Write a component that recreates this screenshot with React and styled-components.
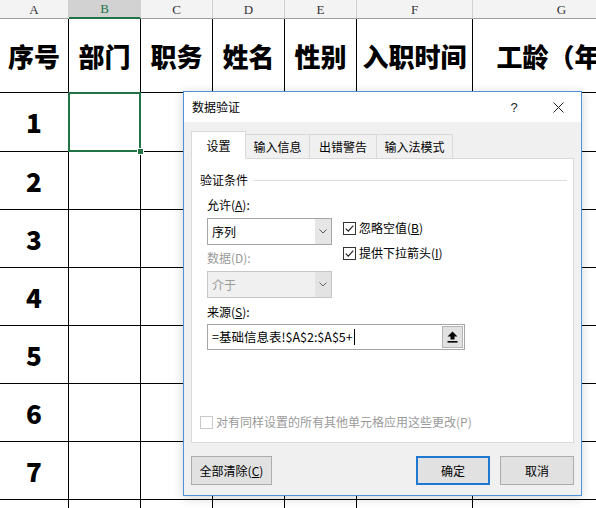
import React from 'react';
import styled, { createGlobalStyle } from 'styled-components';

const GlobalStyle = createGlobalStyle`
  html, body { margin: 0; padding: 0; background: #fff; overflow: hidden; }
  body { font-family: "Noto Sans CJK SC", "Noto Sans", sans-serif; }
  #root { width: 596px; height: 508px; position: relative; overflow: hidden; }
`;

const CJK = `"Noto Sans CJK SC", "Noto Sans", sans-serif`;

/* ---------- Spreadsheet ---------- */
const Sheet = styled.div`
  display: grid;
  grid-template-columns: 69px 72px 72px 72px 72px 116px 178px;
  grid-template-rows: 19px 74px 59px repeat(7, 58px);
  width: 651px;
`;

const ColHead = styled.div`
  box-sizing: border-box;
  display: flex;
  align-items: center;
  justify-content: center;
  background: ${p => (p.$active ? '#d2d2d2' : '#f3f3f3')};
  border-right: 1px solid #cfcfcf;
  border-bottom: ${p => (p.$active ? '2px solid #217346' : '1px solid #9e9e9e')};
  color: ${p => (p.$active ? '#217346' : '#333')};
  font-family: "Liberation Serif", "DejaVu Serif", serif;
  font-size: 13px;
  line-height: 1;
`;

const Cell = styled.div`
  position: relative;
  box-sizing: border-box;
  border-right: 1px solid #000;
  border-bottom: 1px solid #000;
  display: flex;
  align-items: center;
  justify-content: center;
  font-family: ${CJK};
  font-weight: 900;
  font-size: 26px;
  line-height: 1;
  color: #000;
  white-space: nowrap;
  ${p =>
    p.$selected &&
    `
    &::after {
      content: '';
      position: absolute;
      left: -1px; top: -1px; right: -1px; bottom: -1px;
      border: 2px solid #217346;
      z-index: 1;
    }
    &::before {
      content: '';
      position: absolute;
      right: -4px; bottom: -4px;
      width: 5px; height: 5px;
      background: #217346;
      border: 1px solid #fff;
      z-index: 2;
    }
  `}
`;

/* ---------- Dialog ---------- */
const Dialog = styled.div`
  position: absolute;
  left: 183px;
  top: 91px;
  width: 399px;
  box-sizing: border-box;
  border: 1px solid #4d93d9;
  background: #f0f0f0;
  display: flex;
  flex-direction: column;
  font-family: ${CJK};
  font-size: 12px;
  color: #000;
  box-shadow: 0 2px 10px rgba(0, 0, 0, 0.18);
  z-index: 5;
`;

const TitleBar = styled.div`
  height: 30px;
  background: #fff;
  display: flex;
  align-items: center;
  padding-left: 8px;
`;

const Title = styled.span`
  flex: 1;
  line-height: 16px;
`;

const TitleButton = styled.div`
  width: ${p => p.$w}px;
  height: 30px;
  margin-left: ${p => p.$ml || 0}px;
  display: flex;
  align-items: center;
  justify-content: center;
  font-family: "Liberation Sans", sans-serif;
  font-size: 13px;
  color: #222;
`;

const Body = styled.div`
  display: flex;
  flex-direction: column;
  padding: 9px 7px 10px 7px;
`;

const TabList = styled.div`
  display: flex;
  align-items: flex-end;
  height: 27px;
  position: relative;
  z-index: 2;
`;

const Tab = styled.div`
  box-sizing: border-box;
  width: ${p => p.$w}px;
  height: ${p => (p.$active ? 28 : 24)}px;
  margin-bottom: ${p => (p.$active ? -1 : 0)}px;
  margin-left: ${p => (p.$first ? 0 : -1)}px;
  display: flex;
  align-items: flex-end;
  justify-content: center;
  padding-bottom: ${p => (p.$active ? 4 : 3)}px;
  line-height: 16px;
  background: ${p => (p.$active ? '#fff' : '#f0f0f0')};
  border: 1px solid #d9d9d9;
  border-bottom: ${p => (p.$active ? '1px solid #fff' : 'none')};
  position: relative;
  z-index: ${p => (p.$active ? 2 : 1)};
`;

const Panel = styled.div`
  box-sizing: border-box;
  height: 285px;
  background: #fff;
  border: 1px solid #d9d9d9;
  padding: 13px 6px 12px 8px;
  display: flex;
  flex-direction: column;
  position: relative;
  z-index: 1;
`;

const Group = styled.div`
  display: flex;
  align-items: center;
  line-height: 16px;
`;

const GroupLine = styled.div`
  flex: 1;
  height: 1px;
  background: #dcdcdc;
  margin-left: 5px;
`;

const Form = styled.div`
  margin-left: 7px;
  margin-top: 9px;
  display: flex;
  flex-direction: column;
`;

const FieldRow = styled.div`
  display: flex;
`;

const LeftCol = styled.div`
  width: 125px;
  display: flex;
  flex-direction: column;
`;

const RightCol = styled.div`
  margin-left: 11px;
  padding-top: 23px;
  display: flex;
  flex-direction: column;
  gap: 9px;
`;

const Label = styled.div`
  line-height: 16px;
  margin-top: ${p => p.$mt || 0}px;
  color: ${p => (p.$disabled ? '#9a9a9a' : '#000')};
  u { text-underline-offset: 1px; }
`;

const Select = styled.div`
  box-sizing: border-box;
  margin-top: 5px;
  height: 27px;
  width: 125px;
  display: flex;
  border: 1px solid ${p => (p.$disabled ? '#c6c6c6' : '#a6a6a6')};
  background: ${p => (p.$disabled ? '#f0f0f0' : '#fff')};
  color: ${p => (p.$disabled ? '#9a9a9a' : '#000')};
`;

const SelectValue = styled.div`
  flex: 1;
  padding-left: 4px;
  display: flex;
  align-items: center;
`;

const SelectArrow = styled.div`
  width: 16px;
  background: ${p => (p.$disabled ? '#e3e3e3' : '#e6e6e6')};
  display: flex;
  align-items: center;
  justify-content: center;
`;

const CheckRow = styled.div`
  display: flex;
  align-items: center;
  gap: 3px;
  line-height: 16px;
  color: ${p => (p.$disabled ? '#9a9a9a' : '#000')};
`;

const Box = styled.div`
  box-sizing: border-box;
  width: 13px;
  height: 13px;
  border: 1px solid ${p => (p.$disabled ? '#c8c8c8' : '#333')};
  background: #fff;
  display: flex;
  align-items: center;
  justify-content: center;
`;

const SourceInput = styled.div`
  box-sizing: border-box;
  margin-top: 4px;
  width: 258px;
  height: 26px;
  border: 1px solid #a6a6a6;
  background: #fff;
  display: flex;
  align-items: center;
`;

const InputText = styled.div`
  flex: 1;
  padding-left: 4px;
  font-size: 12.5px;
  display: flex;
  align-items: center;
  line-height: 16px;
`;

const Caret = styled.span`
  display: inline-block;
  width: 1px;
  height: 16px;
  background: #000;
  margin-left: 1px;
`;

const UpButton = styled.div`
  box-sizing: border-box;
  width: 21px;
  height: 22px;
  margin-right: 1px;
  background: #e1e1e1;
  border: 1px solid #b4b4b4;
  display: flex;
  align-items: center;
  justify-content: center;
`;

const ApplyAll = styled(CheckRow)`
  margin-top: auto;
`;

const Footer = styled.div`
  margin-top: 13px;
  display: flex;
  align-items: center;
`;

const Button = styled.div`
  box-sizing: border-box;
  width: ${p => p.$w}px;
  height: 29px;
  margin-left: ${p => p.$ml || 0}px;
  background: #e1e1e1;
  border: ${p => (p.$primary ? '2px solid #1f79d3' : '1px solid #adadad')};
  display: flex;
  align-items: center;
  justify-content: center;
  line-height: 16px;
`;

const Spacer = styled.div`
  flex: 1;
`;

/* ---------- Icons ---------- */
const CloseIcon = () => (
  <svg width="11" height="11" viewBox="0 0 11 11">
    <path d="M0.5 0.5 L10.5 10.5 M10.5 0.5 L0.5 10.5" stroke="#222" strokeWidth="1" fill="none" />
  </svg>
);

const Chevron = ({ color = '#555' }) => (
  <svg width="8" height="5" viewBox="0 0 8 5">
    <path d="M0.5 0.5 L4 4 L7.5 0.5" stroke={color} strokeWidth="1" fill="none" />
  </svg>
);

const Check = () => (
  <svg width="11" height="11" viewBox="0 0 11 11">
    <path d="M1.8 5.6 L4.3 8.1 L9.3 2.6" stroke="#222" strokeWidth="1.2" fill="none" />
  </svg>
);

const UpArrowIcon = () => (
  <svg width="11" height="12" viewBox="0 0 11 12">
    <polygon points="5.5,0.5 0.5,5.5 3.5,5.5 3.5,8.5 7.5,8.5 7.5,5.5 10.5,5.5" fill="#000" />
    <rect x="0.5" y="10" width="10" height="1.6" fill="#000" />
  </svg>
);

const columns = ['A', 'B', 'C', 'D', 'E', 'F', 'G'];
const headers = ['序号', '部门', '职务', '姓名', '性别', '入职时间', '工龄（年）'];
const rows = [1, 2, 3, 4, 5, 6, 7, 8];
const tabs = [
  { label: '设置', w: 55, active: true },
  { label: '输入信息', w: 65 },
  { label: '出错警告', w: 68 },
  { label: '输入法模式', w: 77 },
];

export default function App() {
  return (
    <>
      <GlobalStyle />
      <Sheet>
        {columns.map(c => (
          <ColHead key={c} $active={c === 'B'}>{c}</ColHead>
        ))}
        {headers.map(h => (
          <Cell key={h}>{h}</Cell>
        ))}
        {rows.map(r =>
          columns.map((c, i) => (
            <Cell key={`${r}-${c}`} $selected={r === 1 && c === 'B'}>
              {i === 0 && r < 8 ? r : ''}
            </Cell>
          ))
        )}
      </Sheet>

      <Dialog>
        <TitleBar>
          <Title>数据验证</Title>
          <TitleButton $w={36}>?</TitleButton>
          <TitleButton $w={46} $ml={3}>
            <CloseIcon />
          </TitleButton>
        </TitleBar>
        <Body>
          <TabList>
            {tabs.map((t, i) => (
              <Tab key={t.label} $w={t.w} $active={t.active} $first={i === 0}>
                {t.label}
              </Tab>
            ))}
          </TabList>
          <Panel>
            <Group>
              <span>验证条件</span>
              <GroupLine />
            </Group>
            <Form>
              <FieldRow>
                <LeftCol>
                  <Label>
                    允许(<u>A</u>):
                  </Label>
                  <Select>
                    <SelectValue>序列</SelectValue>
                    <SelectArrow>
                      <Chevron />
                    </SelectArrow>
                  </Select>
                  <Label $mt={5} $disabled>
                    数据(D):
                  </Label>
                  <Select $disabled>
                    <SelectValue>介于</SelectValue>
                    <SelectArrow $disabled>
                      <Chevron color="#666" />
                    </SelectArrow>
                  </Select>
                </LeftCol>
                <RightCol>
                  <CheckRow>
                    <Box>
                      <Check />
                    </Box>
                    <span>
                      忽略空值(<u>B</u>)
                    </span>
                  </CheckRow>
                  <CheckRow>
                    <Box>
                      <Check />
                    </Box>
                    <span>
                      提供下拉箭头(<u>I</u>)
                    </span>
                  </CheckRow>
                </RightCol>
              </FieldRow>
              <Label $mt={6}>
                来源(<u>S</u>):
              </Label>
              <SourceInput>
                <InputText>
                  =基础信息表!$A$2:$A$5+
                  <Caret />
                </InputText>
                <UpButton>
                  <UpArrowIcon />
                </UpButton>
              </SourceInput>
            </Form>
            <ApplyAll $disabled>
              <Box $disabled />
              <span>对有同样设置的所有其他单元格应用这些更改(P)</span>
            </ApplyAll>
          </Panel>
          <Footer>
            <Button $w={81}>
              全部清除(<u>C</u>)
            </Button>
            <Spacer />
            <Button $w={74} $primary>
              确定
            </Button>
            <Button $w={74} $ml={10}>
              取消
            </Button>
          </Footer>
        </Body>
      </Dialog>
    </>
  );
}
